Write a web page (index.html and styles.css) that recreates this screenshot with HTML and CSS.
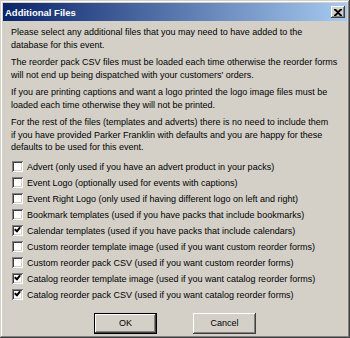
FILE: index.html
```html
<!DOCTYPE html>
<html>
<head>
<meta charset="utf-8">
<link rel="stylesheet" href="styles.css">
</head>
<body>
<div class="window">
  <div class="titlebar">
    <span class="title">Additional Files</span>
    <span class="close"><svg width="8" height="7" viewBox="0 0 8 7"><path d="M0 0h2l2 2 2-2h2v1L5 3.5 8 6v1H6L4 5 2 7H0V6l3-2.5L0 1z" fill="#000"/></svg></span>
  </div>
  <div class="content">
    <p>Please select any additional files that you may need to have added to the<br>database for this event.</p>
    <p>The reorder pack CSV files must be loaded each time otherwise the reorder forms<br>will not end up being dispatched with your customers' orders.</p>
    <p>If you are printing captions and want a logo printed the logo image files must be<br>loaded each time otherwise they will not be printed.</p>
    <p>For the rest of the files (templates and adverts) there is no need to include them<br>if you have provided Parker Franklin with defaults and you are happy for these<br>defaults to be used for this event.</p>
    <ul class="checks">
      <li><span class="cb"></span>Advert (only used if you have an advert product in your packs)</li>
      <li><span class="cb"></span>Event Logo (optionally used for events with captions)</li>
      <li><span class="cb"></span>Event Right Logo (only used if having different logo on left and right)</li>
      <li><span class="cb"></span>Bookmark templates (used if you have packs that include bookmarks)</li>
      <li><span class="cb on"></span>Calendar templates (used if you have packs that include calendars)</li>
      <li><span class="cb"></span>Custom reorder template image (used if you want custom reorder forms)</li>
      <li><span class="cb"></span>Custom reorder pack CSV (used if you want custom reorder forms)</li>
      <li><span class="cb on"></span>Catalog reorder template image (used if you want catalog reorder forms)</li>
      <li><span class="cb on"></span>Catalog reorder pack CSV (used if you want catalog reorder forms)</li>
    </ul>
    <div class="buttons">
      <span class="btn default">OK</span>
      <span class="btn">Cancel</span>
    </div>
  </div>
</div>
</body>
</html>
```
FILE: styles.css
```css
html, body {
  margin: 0;
  padding: 0;
  background: #d4d0c8;
}
.window {
  width: 350px;
  height: 338px;
  box-sizing: border-box;
  padding: 3px;
  background: #d4d0c8;
  box-shadow: inset -1px -1px #404040, inset 1px 1px #d4d0c8, inset -2px -2px #808080, inset 2px 2px #ffffff;
  font-family: "Liberation Sans", Arial, sans-serif;
  font-size: 9px;
  letter-spacing: 0;
  color: #000;
  display: flex;
  flex-direction: column;
  overflow: hidden;
}
.titlebar {
  height: 18px;
  flex: none;
  background: linear-gradient(to right, #0a246a, #a6caf0);
  display: flex;
  align-items: center;
  justify-content: space-between;
  padding: 0 2px 0 2px;
}
.title {
  color: #fff;
  font-weight: bold;
  font-size: 9.5px;
}
.close {
  width: 14px;
  height: 12px;
  background: #d4d0c8;
  box-shadow: inset -1px -1px #404040, inset 1px 1px #ffffff, inset -2px -2px #808080;
  display: flex;
  align-items: center;
  justify-content: center;
}
.close svg { display: block; }
.content {
  padding: 5px 8px 0 8px;
  flex: 1;
  display: flex;
  flex-direction: column;
}
.content p {
  margin: 0 0 5px 0;
  line-height: 12.5px;
  white-space: nowrap;
}
.checks {
  list-style: none;
  margin: 0;
  padding: 0 0 0 1px;
}
.checks li {
  height: 16px;
  display: flex;
  align-items: center;
  gap: 4px;
  white-space: nowrap;
}
.cb {
  width: 11px;
  height: 11px;
  flex: none;
  box-sizing: border-box;
  background: #fff;
  box-shadow: inset 1px 1px #808080, inset -1px -1px #ffffff, inset 2px 2px #404040, inset -2px -2px #d4d0c8;
  position: relative;
}
.cb.on::after {
  content: "";
  position: absolute;
  left: 3px;
  top: 2px;
  width: 4px;
  height: 2px;
  border-left: 2px solid #000;
  border-bottom: 2px solid #000;
  transform: rotate(-50deg);
  transform-origin: left top;
  margin-top: 3px;
  margin-left: -1px;
}
.buttons {
  display: flex;
  justify-content: center;
  gap: 36px;
  margin-top: 10px;
}
.btn {
  width: 63px;
  height: 21px;
  box-sizing: border-box;
  display: flex;
  align-items: center;
  justify-content: center;
  background: #d4d0c8;
  box-shadow: inset -1px -1px #404040, inset 1px 1px #ffffff, inset -2px -2px #808080;
}
.btn.default {
  box-shadow: inset 0 0 0 1px #000, inset -2px -2px #404040, inset 2px 2px #ffffff, inset -3px -3px #808080;
}
```
